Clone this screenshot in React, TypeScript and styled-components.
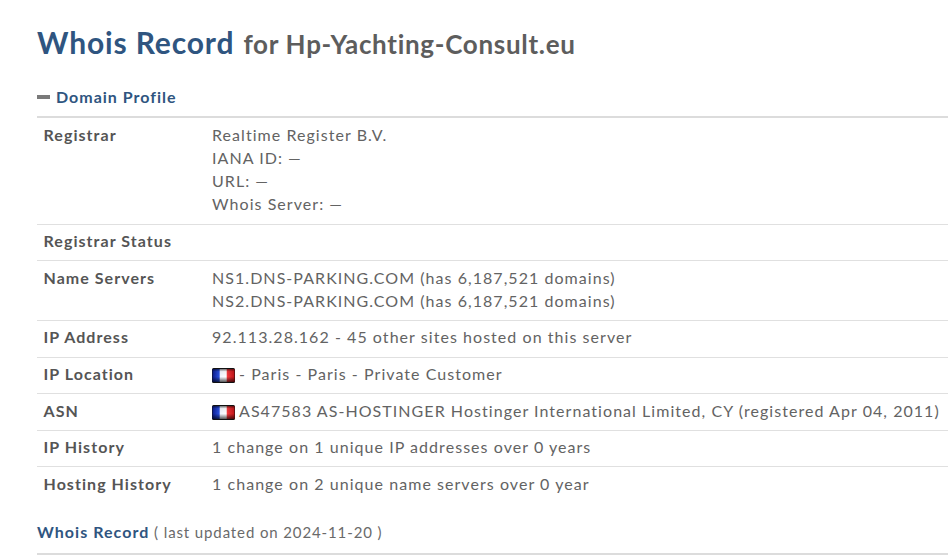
import { ReactElement, ReactNode } from "react";

import styled, { createGlobalStyle } from "styled-components";

const GlobalStyle = createGlobalStyle`
  html, body {
    margin: 0;
    padding: 0;
    height: 556px;
    overflow: hidden;
    background: #fff;
    font-family: Lato, "Liberation Sans", sans-serif;
  }
`;

const Page = styled.div`
  padding: 19px 0 0 37px;
`;

const Title = styled.h1`
  margin: 0;
  height: 46px;
  line-height: 46px;
  font-size: 30px;
  font-weight: 700;
  color: #2f5580;
  letter-spacing: 0.85px;
  white-space: nowrap;
`;

const TitleFor = styled.span`
  margin-left: 1px;
  font-size: 26px;
  color: #5d5d5d;
  letter-spacing: 0.7px;
`;

const SectionHead = styled.div`
  display: flex;
  align-items: flex-start;
  gap: 6px;
  margin-top: 19px;
  height: 34px;
  box-sizing: border-box;
  border-bottom: 2px solid #dcdcdc;
  line-height: 26px;
  font-size: 16px;
  font-weight: 700;
  color: #2f5580;
  letter-spacing: 1px;
`;

const Dash = styled.span`
  width: 13px;
  height: 4px;
  margin-top: 11px;
  background: #7a7a7a;
`;

const RowList = styled.div`
  padding-top: 0.9px;
`;

const Row = styled.div`
  display: flex;
  border-bottom: 1px solid #e0e0e0;
  padding: 4.5px 0 8.17px 6.5px;
  line-height: 23px;
  font-size: 16px;
  letter-spacing: 1.05px;
  color: #636363;

  &:last-child {
    border-bottom: none;
  }
`;

const Label = styled.div`
  flex: 0 0 168.5px;
  min-height: 23px;
  font-weight: 700;
  color: #555;
`;

const Value = styled.div`
  white-space: nowrap;
`;

const Flag = styled.svg`
  width: 23px;
  height: 15px;
  vertical-align: -3px;
  margin-right: 4px;
`;

const RecordHead = styled.div`
  margin-top: 13px;
  height: 39px;
  line-height: 31px;
  box-sizing: border-box;
  border-bottom: 2px solid #dcdcdc;
  font-size: 15px;
  letter-spacing: 0.88px;
  color: #6a6a6a;
`;

const RecordTitle = styled.span`
  font-size: 16px;
  letter-spacing: 1.05px;
  font-weight: 700;
  color: #2f5580;
`;

function FranceFlag(): ReactElement {
  return (
    <Flag viewBox="0 0 23 15">
      <defs>
        <linearGradient id="flagBands" x1="0" y1="0" x2="1" y2="0">
          <stop offset="0" stopColor="#0c1c8c" />
          <stop offset="0.3" stopColor="#2a50e0" />
          <stop offset="0.36" stopColor="#f4f6ff" />
          <stop offset="0.62" stopColor="#ffffff" />
          <stop offset="0.68" stopColor="#f0383c" />
          <stop offset="1" stopColor="#c01418" />
        </linearGradient>
        <linearGradient id="flagGloss" x1="0" y1="0" x2="0" y2="1">
          <stop offset="0" stopColor="#000" stopOpacity="0.55" />
          <stop offset="0.2" stopColor="#000" stopOpacity="0.05" />
          <stop offset="0.6" stopColor="#000" stopOpacity="0" />
          <stop offset="1" stopColor="#000" stopOpacity="0.65" />
        </linearGradient>
      </defs>
      <rect width="23" height="15" rx="1.5" fill="#111" />
      <rect x="0.5" y="1" width="22" height="13" fill="url(#flagBands)" />
      <rect x="0.5" y="1" width="22" height="13" fill="url(#flagGloss)" />
    </Flag>
  );
}

const rows: { label: string; value: ReactNode }[] = [
  {
    label: "Registrar",
    value: (
      <>
        Realtime Register B.V.
        <br />
        IANA ID: —
        <br />
        URL: —
        <br />
        Whois Server: —
      </>
    ),
  },
  { label: "Registrar Status", value: "" },
  {
    label: "Name Servers",
    value: (
      <>
        NS1.DNS-PARKING.COM (has 6,187,521 domains)
        <br />
        NS2.DNS-PARKING.COM (has 6,187,521 domains)
      </>
    ),
  },
  { label: "IP Address", value: "92.113.28.162 - 45 other sites hosted on this server" },
  {
    label: "IP Location",
    value: (
      <>
        <FranceFlag />- Paris - Paris - Private Customer
      </>
    ),
  },
  {
    label: "ASN",
    value: (
      <>
        <FranceFlag />
        AS47583 AS-HOSTINGER Hostinger International Limited, CY (registered Apr 04, 2011)
      </>
    ),
  },
  { label: "IP History", value: "1 change on 1 unique IP addresses over 0 years" },
  { label: "Hosting History", value: "1 change on 2 unique name servers over 0 year" },
];

export default function App(): ReactElement {
  return (
    <Page>
      <GlobalStyle />
      <Title>
        Whois Record <TitleFor>for Hp-Yachting-Consult.eu</TitleFor>
      </Title>
      <SectionHead>
        <Dash />
        Domain Profile
      </SectionHead>
      <RowList>
        {rows.map((row) => (
          <Row key={row.label}>
            <Label>{row.label}</Label>
            <Value>{row.value}</Value>
          </Row>
        ))}
      </RowList>
      <RecordHead>
        <RecordTitle>Whois Record</RecordTitle> ( last updated on 2024-11-20 )
      </RecordHead>
    </Page>
  );
}
